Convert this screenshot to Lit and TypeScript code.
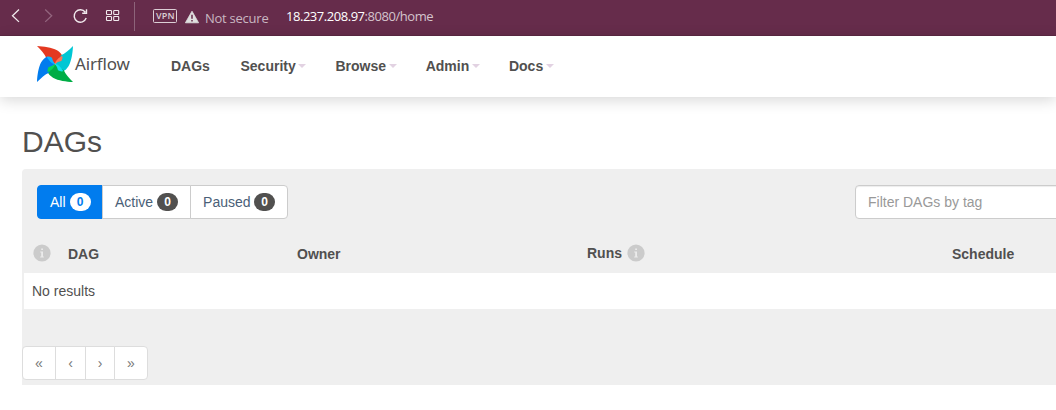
import { LitElement, html, css, svg } from "lit";
import { customElement } from "lit/decorators.js";

const blades = [
  { angle: 0, dark: "#e43921", light: "#ff7557" },
  { angle: 90, dark: "#00c7d4", light: "#11e1ee" },
  { angle: 180, dark: "#00ad46", light: "#04d659" },
  { angle: 270, dark: "#017cee", light: "#0cb6ff" },
];

const infoIcon = html`<svg class="info" width="18" height="18" viewBox="0 0 18 18">
  <circle cx="9" cy="9" r="8.6" fill="#cbcbcb" />
  <path d="M8.2 4.4h1.8v1.6H8.2zM7.2 7.4h2.8v5h.8v1H7.2v-1h1v-4h-1z" fill="#ebebeb" />
</svg>`;

@customElement("app-root")
export class AppRoot extends LitElement {
  static styles = css`
    :host {
      display: block;
      height: 410px;
      overflow: hidden;
      background: #fff;
      color: #51504f;
      font: 14px/20px "Liberation Sans", Arial, sans-serif;
    }
    * { box-sizing: border-box; }
    svg { display: block; flex: none; }
    .browser {
      display: flex;
      height: 36px;
      background: #662c4b;
      border-bottom: 1px solid #5c2843;
      font-family: "Open Sans", "Noto Sans", sans-serif;
    }
    .insecure {
      margin: 8px 0 0 5px;
      width: 81px;
      font-size: 13px;
      letter-spacing: -0.25px;
      color: #c9b7c1;
      white-space: nowrap;
    }
    .url {
      margin-top: 6px;
      font-size: 13px;
      letter-spacing: -0.46px;
      color: #d4c4cd;
      white-space: nowrap;
    }
    .host { color: #fff; }
    .nav {
      display: flex;
      align-items: center;
      height: 61px;
      padding: 0 0 2px 37px;
      background: #fff;
      box-shadow: 0 3px 14px rgba(0, 0, 0, 0.16);
    }
    .brand { display: flex; width: 134px; height: 42px; }
    .logo { margin-top: 1px; }
    .name {
      margin: 8px 0 0 2px;
      font: 17px/22px "Noto Sans", sans-serif;
      letter-spacing: -0.15px;
    }
    .menu { display: flex; gap: 29px; font-weight: 700; }
    .item { display: flex; align-items: center; }
    .item:first-child { width: 40.5px; }
    .caret {
      margin: 1px 0 0 2.7px;
      border: 4px solid transparent;
      border-top-color: #e2d2e2;
      border-bottom: 0;
    }
    .main { padding: 25px 0 0 22px; }
    h2 { margin: 0; font-size: 30px; line-height: 40px; font-weight: 400; }
    .panel {
      width: 1060px;
      height: 216px;
      margin-top: 7px;
      background: #efefef;
      border-radius: 4px 4px 0 0;
    }
    .tools { display: flex; justify-content: space-between; height: 66px; padding: 16px 0 0 15px; }
    .group { display: flex; height: 34px; }
    .btn {
      display: flex;
      align-items: center;
      gap: 4px;
      padding: 0 12px;
      margin-left: -1px;
      background: #fff;
      border: 1px solid #ccc;
      color: #4a6077;
    }
    .btn:first-child { margin-left: 0; padding-right: 11.4px; background: #017cee; border-color: #017cee; color: #fff; border-radius: 4px 0 0 4px; }
    .btn:last-child { padding-right: 11.5px; border-radius: 0 4px 4px 0; }
    .badge {
      width: 21px;
      height: 18px;
      border-radius: 9px;
      background: #51504f;
      color: #fff;
      font-size: 12px;
      line-height: 18px;
      font-weight: 700;
      text-align: center;
    }
    .btn:first-child .badge { background: #fff; color: #017cee; }
    .btn:last-child .badge { margin-left: -0.5px; }
    .filter {
      width: 227px;
      height: 34px;
      padding: 6px 12px;
      background: #fff;
      border: 1px solid #ccc;
      border-radius: 4px;
      box-shadow: inset 0 1px 1px rgba(0, 0, 0, 0.075);
      color: #999;
    }
    .head {
      display: grid;
      grid-template-columns: 35px 229px 290px 365px 1fr;
      height: 38px;
      padding-left: 11px;
      font-weight: 700;
    }
    .cell { display: flex; padding-top: 9px; }
    .runs { gap: 5px; padding-top: 8px; }
    .runs .info { margin-top: 1px; }
    .row { height: 36px; margin-left: 2px; padding: 8px; background: #fff; }
    .pages { display: flex; padding-top: 37px; }
    .page {
      height: 34px;
      padding: 6px 0;
      margin-left: -1px;
      text-align: center;
      background: #fff;
      border: 1px solid #ddd;
      color: #777;
      width: 31px;
    }
    .page:first-child { margin-left: 0; width: 34px; border-radius: 4px 0 0 4px; }
    .page:nth-child(3) { width: 30px; }
    .page:last-child { width: 34px; border-radius: 0 4px 4px 0; }
  `;

  render() {
    return html`
      <div class="browser">
        <svg width="200" height="35" viewBox="0 0 200 35" fill="none">
          <path d="M19 9.5l-6.5 6.2 6.5 6.2" stroke="#f1e9ed" stroke-width="1.3" />
          <path d="M45.2 9.5l6.5 6.2-6.5 6.2" stroke="#93657e" stroke-width="1.3" />
          <path d="M85.3 12.2a6.2 6.2 0 1 0 .9 5.9M86.5 9.3v4h-4.3" stroke="#f1e9ed" stroke-width="1.4" />
          <g stroke="#f1e9ed" stroke-width="1.1">
            <rect x="106.5" y="10.5" width="5" height="4" rx=".7" />
            <rect x="113.7" y="10.5" width="5" height="4" rx=".7" />
            <rect x="106.5" y="16.5" width="5" height="4" rx=".7" />
            <rect x="113.7" y="16.5" width="5" height="4" rx=".7" />
          </g>
          <path d="M134.5 2v29" stroke="#8d647a" />
          <rect x="153.5" y="9.5" width="23" height="13" rx="1" stroke="#dccfd6" />
          <text x="156" y="19.4" font-size="9" font-weight="600" textLength="18.5" fill="#dccfd6">VPN</text>
          <path d="M192 11.2l6.6 11.6h-13.2z" fill="#dfdfdf" stroke="#dfdfdf" stroke-width=".8" stroke-linejoin="round" />
          <path d="M192 14.8v4M192 20v1.5" stroke="#662c4b" stroke-width="1.5" />
        </svg>
        <span class="insecure">Not secure</span>
        <span class="url"><span class="host">18.237.208.97</span>:8080/home</span>
      </div>
      <div class="nav">
        <div class="brand">
          <svg class="logo" width="36" height="36" viewBox="0 0 108 108">
            ${blades.map(
              (b) => svg`<path transform=${`rotate(${b.angle} 54 54)`} fill=${b.dark}
                d="M0 0C20 1 44 4 60 13C68 18 74 24 76 30C72 40 62 48 54 54C50 47 42 41 28 36C23 24 12 12 0 0z" />`
            )}
            ${blades.map(
              (b) => svg`<path transform=${`rotate(${b.angle} 54 54)`} fill=${b.light}
                d="M76 29C77 35 76 40 73 45C66 47 58 49 54 54C54 45 64 36 76 29z" />`
            )}
          </svg>
          <span class="name">Airflow</span>
        </div>
        <div class="menu">
          <span class="item">DAGs</span>
          ${["Security", "Browse", "Admin", "Docs"].map(
            (t) => html`<span class="item">${t}<i class="caret"></i></span>`
          )}
        </div>
      </div>
      <div class="main">
        <h2>DAGs</h2>
        <div class="panel">
          <div class="tools">
            <div class="group">
              ${["All", "Active", "Paused"].map(
                (t) => html`<span class="btn">${t}<span class="badge">0</span></span>`
              )}
            </div>
            <div class="filter">Filter DAGs by tag</div>
          </div>
          <div class="head">
            <span class="cell">${infoIcon}</span>
            <span class="cell">DAG</span>
            <span class="cell">Owner</span>
            <span class="cell runs">Runs ${infoIcon}</span>
            <span class="cell">Schedule</span>
          </div>
          <div class="row">No results</div>
          <div class="pages">
            ${["«", "‹", "›", "»"].map((t) => html`<span class="page">${t}</span>`)}
          </div>
        </div>
      </div>
    `;
  }
}
